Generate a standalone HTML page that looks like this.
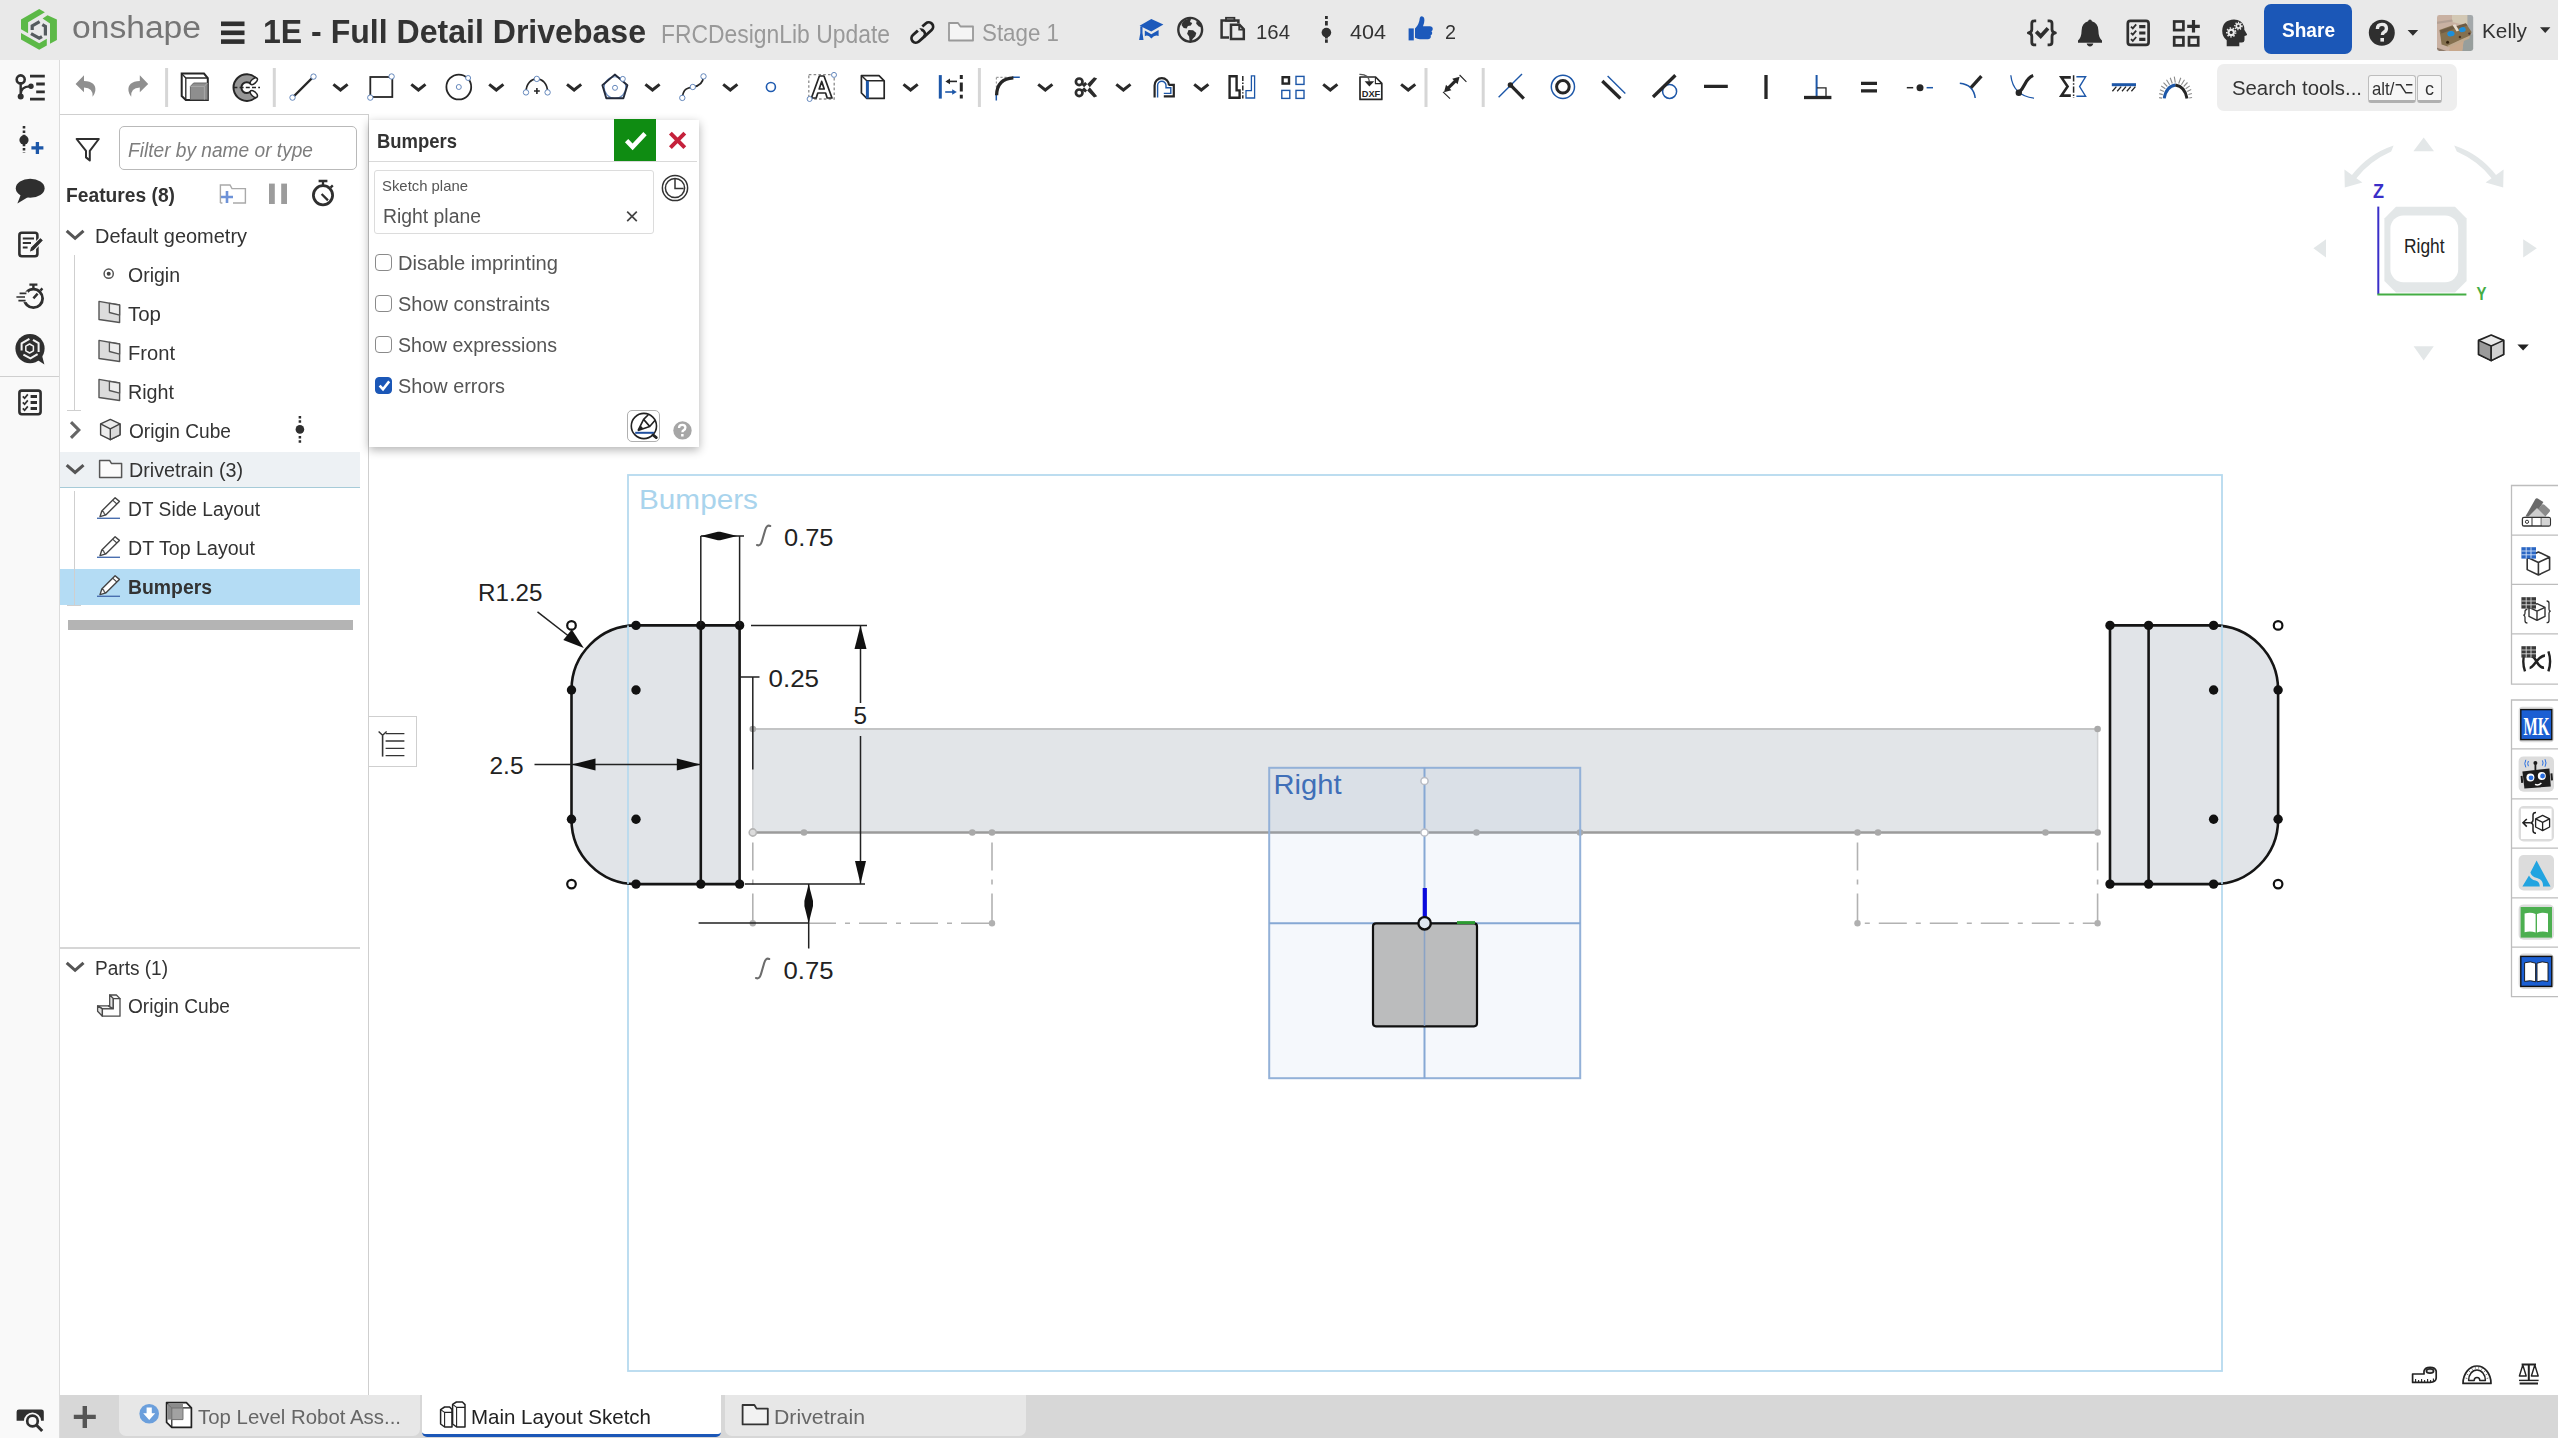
<!DOCTYPE html>
<html lang="en">
<head>
<meta charset="utf-8">
<title>1E - Full Detail Drivebase | Main Layout Sketch</title>
<style>
*{box-sizing:border-box;margin:0;padding:0}
html,body{width:2558px;height:1438px;overflow:hidden;background:#fff}
body{position:relative;font-family:"Liberation Sans",sans-serif;color:#333;font-size:20px}
.abs{position:absolute}
/* fitted text: top = baseline y; margin pulls up to baseline */
.t{position:absolute;white-space:nowrap;line-height:1;transform-origin:0 0;margin-top:-.8465em;display:block}
svg{position:absolute;overflow:visible}
#header{position:absolute;left:0;top:0;width:2558px;height:60px;background:#e9e9e9}
#leftcol{position:absolute;left:0;top:60px;width:60px;height:1378px;background:#f9f9f9;border-right:1px solid #dcdcdc}
#toolbar{position:absolute;left:60px;top:60px;width:2498px;height:55px;background:#fff}
#fpanel{position:absolute;left:60px;top:114px;width:309px;height:1281px;background:#fff;border-top:1px solid #cfcfcf;border-right:1px solid #cfcfcf}
#bottombar{position:absolute;left:60px;top:1395px;width:2498px;height:43px;background:#d7d7d7}
#dialog{position:absolute;left:369px;top:119.6px;width:330px;height:327px;background:#fff;box-shadow:0 3px 9px rgba(0,0,0,.3)}
.cb{left:6px;width:17px;height:17px;border:1.5px solid #8a8a8a;border-radius:4px;background:#fff}
.cb.on{background:#1b57b7;border-color:#1b57b7}
.tab{position:absolute;top:0;height:40px;background:#e7e7e7;border-radius:0 0 7px 7px}
</style>
</head>
<body>

<!-- ================= HEADER ================= -->
<div id="header">
  <span class="t" style="transform:scaleX(1.0845);left:72px;top:38px;font-size:31px;color:#757575">onshape</span>
  <span class="t" style="transform:scaleX(0.9427);left:263px;top:43px;font-size:34px;font-weight:bold;color:#333">1E - Full Detail Drivebase</span>
  <span class="t" style="transform:scaleX(0.9155);left:661px;top:43px;font-size:25px;color:#999">FRCDesignLib Update</span>
  <span class="t" style="transform:scaleX(0.9307);left:982px;top:41px;font-size:24px;color:#999">Stage 1</span>
  <span class="t" style="transform:scaleX(0.9701);left:1256px;top:39px;font-size:21px;color:#333">164</span>
  <span class="t" style="transform:scaleX(1.0272);left:1350px;top:39px;font-size:21px;color:#333">404</span>
  <span class="t" style="transform:scaleX(0.9412);left:1445px;top:39px;font-size:21px;color:#333">2</span>
  <div class="abs" style="left:2264px;top:4px;width:88px;height:50px;border-radius:7px;background:#1b57b7"></div>
  <span class="t" style="transform:scaleX(0.9301);left:2282px;top:37px;font-size:20.5px;font-weight:bold;color:#fff">Share</span>
  <span class="t" style="transform:scaleX(0.9883);left:2482px;top:38px;font-size:21px;color:#333">Kelly</span>
</div>

<!-- ================= TOOLBAR ================= -->
<div id="toolbar">
  <div class="abs" style="left:2157px;top:4px;width:240px;height:47px;border-radius:7px;background:#eeeeee"></div>
  <span class="t" style="transform:scaleX(0.9920);left:2172px;top:35px;font-size:20.5px;color:#333">Search tools...</span>
  <div class="abs" style="left:2308px;top:15px;width:48px;height:28px;border:1px solid #bdbdbd;border-bottom:3px solid #b0b0b0;border-radius:3px;background:#f6f6f6"></div>
  <div class="abs" style="left:2357px;top:15px;width:25px;height:28px;border:1px solid #bdbdbd;border-bottom:3px solid #b0b0b0;border-radius:3px;background:#f6f6f6"></div>
  <span class="t" style="transform:scaleX(0.8833);left:2312.2px;top:35px;font-size:19px;color:#333">alt/</span>
  <span class="t" style="transform:scaleX(0.9474);left:2365px;top:35px;font-size:19px;color:#333">c</span>
</div>

<!-- ================= LEFT ICON COLUMN ================= -->
<div id="leftcol"></div>

<!-- ================= FEATURE PANEL ================= -->
<div id="fpanel">
  <!-- filter -->
  <div class="abs" style="left:59px;top:11px;width:238px;height:44px;border:1px solid #b9b9b9;border-radius:5px;background:#fff"></div>
  <span class="t" style="transform:scaleX(0.9565);left:68px;top:42px;font-size:20px;font-style:italic;color:#7d7d7d">Filter by name or type</span>
  <span class="t" style="transform:scaleX(0.9614);left:6px;top:87px;font-size:20px;font-weight:bold;color:#333">Features (8)</span>
  <!-- rows: row centre y (page) = 235 + 39*i ; panel top is 114 (border 1) -->
  <div class="abs" style="left:0;top:337px;width:300px;height:36px;background:#edf1f4;border-bottom:1.5px solid #a6cbd8"></div>
  <div class="abs" style="left:0;top:454px;width:300px;height:36px;background:#b4dcf4"></div>
  <div class="abs" style="left:14px;top:140px;width:1px;height:156px;background:#cfcfcf"></div>
  <div class="abs" style="left:7px;top:295px;width:14px;height:1px;background:#cfcfcf"></div>
  <div class="abs" style="left:14px;top:376px;width:1px;height:115px;background:#cfcfcf"></div><div class="abs" style="left:7px;top:490px;width:14px;height:1px;background:#cfcfcf"></div>
  <span class="t" style="transform:scaleX(0.9981);left:35px;top:128px;font-size:20px">Default geometry</span>
  <span class="t" style="transform:scaleX(0.9745);left:68px;top:167px;font-size:20px">Origin</span>
  <span class="t" style="transform:scaleX(1.0233);left:68px;top:206px;font-size:20px">Top</span>
  <span class="t" style="transform:scaleX(1.0067);left:68px;top:245px;font-size:20px">Front</span>
  <span class="t" style="transform:scaleX(0.9849);left:68px;top:284px;font-size:20px">Right</span>
  <span class="t" style="transform:scaleX(0.9558);left:69px;top:323px;font-size:20px">Origin Cube</span>
  <span class="t" style="transform:scaleX(0.9863);left:69px;top:362px;font-size:20px">Drivetrain (3)</span>
  <span class="t" style="transform:scaleX(0.9600);left:68px;top:401px;font-size:20px">DT Side Layout</span>
  <span class="t" style="transform:scaleX(0.9818);left:68px;top:440px;font-size:20px">DT Top Layout</span>
  <span class="t" style="transform:scaleX(0.9688);left:68px;top:479px;font-size:20px;font-weight:bold">Bumpers</span>
  <div class="abs" style="left:8px;top:505px;width:285px;height:10px;background:#b4b4b4"></div>
  <div class="abs" style="left:0;top:832px;width:300px;height:2px;background:#d6d6d6"></div>
  <span class="t" style="transform:scaleX(0.9519);left:35px;top:860px;font-size:20px">Parts (1)</span>
  <span class="t" style="transform:scaleX(0.9558);left:68px;top:898px;font-size:20px">Origin Cube</span>
</div>

<!-- ================= CANVAS ================= -->
<svg id="canvas" style="left:0;top:0" width="2558" height="1438" viewBox="0 0 2558 1438" font-family="Liberation Sans, sans-serif">
  <!-- sketch boundary -->
  <rect x="628" y="475" width="1594" height="896" fill="none" stroke="#b6daef" stroke-width="1.8"/>
  <text x="639" y="508.5" font-size="27.5" fill="#a9d4ed" textLength="119" lengthAdjust="spacingAndGlyphs">Bumpers</text>

  <!-- long grey frame rect -->
  <rect x="752.8" y="729" width="1344.8" height="103.5" fill="#e2e5e8"/>
  <line x1="752.8" y1="729" x2="2097.6" y2="729" stroke="#c3c4c5" stroke-width="2.2"/>
  <line x1="752.8" y1="729" x2="752.8" y2="832.5" stroke="#d0d2d4" stroke-width="1.5"/>
  <line x1="2097.6" y1="729" x2="2097.6" y2="832.5" stroke="#d0d2d4" stroke-width="1.5"/>
  <line x1="752.8" y1="832.5" x2="2097.6" y2="832.5" stroke="#9b9b9b" stroke-width="2.6"/>

  <!-- dash-dot construction rects -->
  <g fill="none" stroke="#b2b2b2" stroke-width="1.6" stroke-dasharray="28 9 5 9">
    <path d="M752.8,842.5 V923.2 M808,923.2 H992 M992,842.5 V923.2"/>
    <path d="M1857.5,842.5 V923.2 H2097.6 M2097.6,842.5 V923.2"/>
  </g>
  <circle cx="804" cy="832.5" r="3.3" fill="#a9a9a9"/><circle cx="972.3" cy="832.5" r="3.3" fill="#a9a9a9"/><circle cx="992" cy="832.5" r="3.3" fill="#a9a9a9"/><circle cx="1476.5" cy="832.5" r="3.3" fill="#a9a9a9"/><circle cx="1580" cy="832.5" r="3.3" fill="#a9a9a9"/><circle cx="1857.5" cy="832.5" r="3.3" fill="#a9a9a9"/><circle cx="1878" cy="832.5" r="3.3" fill="#a9a9a9"/><circle cx="2045.5" cy="832.5" r="3.3" fill="#a9a9a9"/><circle cx="2097.6" cy="832.5" r="3.3" fill="#a9a9a9"/><circle cx="2097.6" cy="729" r="3.3" fill="#a9a9a9"/><circle cx="752.8" cy="729" r="3.3" fill="#a9a9a9"/>
  <circle cx="752.8" cy="923.2" r="3.2" fill="#b0b0b0"/><circle cx="992" cy="923.2" r="3.2" fill="#b0b0b0"/><circle cx="1857.5" cy="923.2" r="3.2" fill="#b0b0b0"/><circle cx="2097.6" cy="923.2" r="3.2" fill="#b0b0b0"/>
  <circle cx="752.8" cy="832.5" r="3.6" fill="#dcdcdc" stroke="#b5b5b5" stroke-width="1.6"/>

  <!-- Right plane -->
  <rect x="1269.2" y="767.8" width="311" height="310.4" fill="#8fb4d9" fill-opacity=".09" stroke="#93b1d8" stroke-width="2"/>
  <line x1="1424.5" y1="767.8" x2="1424.5" y2="1078.2" stroke="#86a8d4" stroke-width="2"/>
  <line x1="1269.2" y1="923.3" x2="1580.2" y2="923.3" stroke="#86a8d4" stroke-width="2"/>
  <text x="1273.5" y="794" font-size="28" fill="#3f6fb8" textLength="68" lengthAdjust="spacingAndGlyphs">Right</text>
  <circle cx="1424.5" cy="781" r="3.6" fill="#fff" stroke="#b9bcc4" stroke-width="1.5"/><circle cx="1424.5" cy="832.5" r="3.6" fill="#fff" stroke="#b9bcc4" stroke-width="1.5"/>

  <!-- origin cube -->
  <rect x="1373" y="923.3" width="104" height="103" rx="3" fill="#bbbcbd" stroke="#111" stroke-width="2.2"/>
  <line x1="1424.5" y1="924" x2="1424.5" y2="1026" stroke="#7f9dc8" stroke-width="1.6" opacity=".8"/>
  <line x1="1457" y1="922.6" x2="1475" y2="922.6" stroke="#2c9b32" stroke-width="3"/>
  <line x1="1424.8" y1="888" x2="1424.8" y2="918" stroke="#0a0adc" stroke-width="4.2"/>
  <circle cx="1424.6" cy="923.3" r="6.2" fill="#dfe6f0" stroke="#111" stroke-width="2.4"/>

  <!-- LEFT bumper -->
  <path d="M636,625.4 H739.6 V884.1 H636 A64.5,64.5 0 0 1 571.5,819.3 V690 A64.5,64.5 0 0 1 636,625.4 Z" fill="#e1e4e8" stroke="#151515" stroke-width="2.6" stroke-linejoin="round"/>
  <line x1="700.8" y1="625.4" x2="700.8" y2="884.1" stroke="#151515" stroke-width="2.6"/>
  <line x1="628" y1="625.4" x2="628" y2="884.1" stroke="#b3d8ee" stroke-width="1.6"/>
  <circle cx="636" cy="625.4" r="4.7" fill="#111"/><circle cx="700.8" cy="625.4" r="4.7" fill="#111"/><circle cx="739.6" cy="625.4" r="4.7" fill="#111"/><circle cx="571.5" cy="690" r="4.7" fill="#111"/><circle cx="636" cy="690" r="4.7" fill="#111"/><circle cx="571.5" cy="819.3" r="4.7" fill="#111"/><circle cx="636" cy="819.3" r="4.7" fill="#111"/><circle cx="636" cy="884.1" r="4.7" fill="#111"/><circle cx="700.8" cy="884.1" r="4.7" fill="#111"/><circle cx="739.6" cy="884.1" r="4.7" fill="#111"/>
  <circle cx="571.5" cy="625.4" r="4.3" fill="#fff" stroke="#111" stroke-width="2.2"/><circle cx="571.5" cy="884.1" r="4.3" fill="#fff" stroke="#111" stroke-width="2.2"/>

  <!-- RIGHT bumper -->
  <path d="M2213.6,625.4 H2110 V884.1 H2213.6 A64.5,64.5 0 0 0 2278.1,819.3 V690 A64.5,64.5 0 0 0 2213.6,625.4 Z" fill="#e1e4e8" stroke="#151515" stroke-width="2.6" stroke-linejoin="round"/>
  <line x1="2148.6" y1="625.4" x2="2148.6" y2="884.1" stroke="#151515" stroke-width="2.6"/>
  <line x1="2222" y1="625.4" x2="2222" y2="884.1" stroke="#b3d8ee" stroke-width="1.6"/>
  <circle cx="2110" cy="625.4" r="4.7" fill="#111"/><circle cx="2148.6" cy="625.4" r="4.7" fill="#111"/><circle cx="2213.6" cy="625.4" r="4.7" fill="#111"/><circle cx="2213.6" cy="690" r="4.7" fill="#111"/><circle cx="2278.1" cy="690" r="4.7" fill="#111"/><circle cx="2213.6" cy="819.3" r="4.7" fill="#111"/><circle cx="2278.1" cy="819.3" r="4.7" fill="#111"/><circle cx="2110" cy="884.1" r="4.7" fill="#111"/><circle cx="2148.6" cy="884.1" r="4.7" fill="#111"/><circle cx="2213.6" cy="884.1" r="4.7" fill="#111"/>
  <circle cx="2278.1" cy="625.4" r="4.3" fill="#fff" stroke="#111" stroke-width="2.2"/><circle cx="2278.1" cy="884.1" r="4.3" fill="#fff" stroke="#111" stroke-width="2.2"/>

  <!-- DIMENSIONS -->
  <g stroke="#222" stroke-width="1.5" fill="none">
    <!-- 0.75 top -->
    <path d="M700.8,625.4 V536 M739.6,625.4 V536 M700.8,536 H744"/>
    <!-- 5 -->
    <path d="M751,625.4 H867 M745,884.1 H865 M860.5,625.4 V703 M860.5,736 V884.1"/>
    <!-- 0.25 -->
    <path d="M739.6,677 H759.5 M752.8,677 V769.5"/>
    <!-- 2.5 -->
    <path d="M534.5,764.6 H700.8"/>
    <!-- 0.75 bottom -->
    <path d="M808.7,884.1 V948.5 M698.6,923 H808.7"/>
    <!-- R1.25 leader -->
    <path d="M537.5,611.8 L575,641"/>
  </g>
  <g fill="#111">
    <path d="M700.8,536 l17,-4.3 l2.4,0 l17,4.3 l-17,4.3 l-2.4,0 Z"/>
    <path d="M860.5,625.4 l-6,23.5 h12 Z"/>
    <path d="M860.5,884.1 l-5.5,-23 h11 Z"/>
    <path d="M571.5,764.6 l24,-6 v12 Z"/>
    <path d="M700.8,764.6 l-24,-6 v12 Z"/>
    <path d="M808.7,884.1 l-4.3,17 v5 l4.3,17.2 l4.3,-17.2 v-5 Z"/>
    <path d="M583.8,648 l-20.5,-8 l8.5,-10.5 Z"/>
  </g>
  <g fill="#222" font-size="24">
    <text x="784" y="546" textLength="49.5" lengthAdjust="spacingAndGlyphs">0.75</text>
    <text x="478" y="600.6" textLength="64.5" lengthAdjust="spacingAndGlyphs">R1.25</text>
    <text x="768.5" y="686.6" textLength="50.5" lengthAdjust="spacingAndGlyphs">0.25</text>
    <text x="853.5" y="724" textLength="13.5" lengthAdjust="spacingAndGlyphs">5</text>
    <text x="489.5" y="774.4" textLength="34" lengthAdjust="spacingAndGlyphs">2.5</text>
    <text x="783.5" y="979" textLength="50" lengthAdjust="spacingAndGlyphs">0.75</text>
  </g>
  <g fill="none" stroke="#6c6c6c" stroke-width="2.1" stroke-linecap="round">
    <path d="M757,545 q3.5,1.5 5,-4 l3.2,-11 q1.5,-5.5 5,-4"/>
    <path d="M756,978 q3.5,1.5 5,-4 l3.2,-11 q1.5,-5.5 5,-4"/>
  </g>
</svg>

<!-- ================= DIALOG ================= -->
<div id="dialog">
  <span class="t" style="transform:scaleX(0.8788);left:8px;top:28px;font-size:21px;font-weight:bold;color:#333">Bumpers</span>
  <div class="abs" style="left:0;top:41px;width:328px;height:1px;background:#d9d9d9"></div>
  <div class="abs" style="left:245px;top:-1px;width:42px;height:42px;background:#0f8c12"></div>
  <div class="abs" style="left:5px;top:50px;width:280px;height:64px;border:1px solid #dcdcdc;border-radius:3px"></div>
  <span class="t" style="transform:scaleX(0.9915);left:13px;top:71px;font-size:15px;color:#555">Sketch plane</span>
  <span class="t" style="transform:scaleX(0.9685);left:14px;top:103px;font-size:20px;color:#555">Right plane</span>
  <div class="abs cb" style="top:134px"></div>
  <div class="abs cb" style="top:175px"></div>
  <div class="abs cb" style="top:216px"></div>
  <div class="abs cb on" style="top:257px"></div>
  <span class="t" style="transform:scaleX(1.0065);left:29px;top:150px;font-size:20px;color:#555">Disable imprinting</span>
  <span class="t" style="transform:scaleX(0.9981);left:29px;top:191px;font-size:20px;color:#555">Show constraints</span>
  <span class="t" style="transform:scaleX(0.9796);left:29px;top:232px;font-size:20px;color:#555">Show expressions</span>
  <span class="t" style="transform:scaleX(0.9925);left:29px;top:273px;font-size:20px;color:#555">Show errors</span>
  <div class="abs" style="left:258.4px;top:290px;width:32.6px;height:32.8px;border:1px solid #b0b0b0;border-radius:5px;background:#fff"></div>
</div>
<div class="abs" style="left:369px;top:716px;width:48px;height:51px;border:1px solid #cfcfcf;border-left:none;background:#fff"></div>

<!-- ================= BOTTOM BAR ================= -->
<div id="bottombar">
  <div class="tab" style="left:58.6px;width:301px;height:41px"></div>
  <div class="tab" style="left:362px;width:299px;background:#fff;border-bottom:3px solid #1b57b7;border-radius:0 0 5px 5px;height:42px"></div>
  <div class="tab" style="left:664.6px;width:301px;height:41px"></div>
  <span class="t" style="transform:scaleX(0.9714);left:138px;top:29px;font-size:21px;color:#666">Top Level Robot Ass...</span>
  <span class="t" style="transform:scaleX(0.9759);left:411px;top:29px;font-size:21px;color:#222">Main Layout Sketch</span>
  <span class="t" style="transform:scaleX(1.0127);left:714px;top:29px;font-size:21px;color:#666">Drivetrain</span>
</div>

<!-- ================= ICON OVERLAY (page coords) ================= -->
<svg id="icons" style="left:0;top:0" width="2558" height="1438" viewBox="0 0 2558 1438" fill="none" stroke-linecap="butt">
<g id="hdr-icons">
  <!-- onshape logo -->
  <g fill="#5cb947">
    <path d="M39.2,9 L44.9,12.3 L28.1,22.3 L28.1,33.3 L21,29.3 L21,19.6 Z"/>
    <path d="M21,32.9 L39.2,43.2 L46.8,38.7 L46.8,45.4 L39.2,49.8 L21,39.6 Z"/>
    <path d="M47.5,15.2 L56.9,19.6 L56.9,40 L50,43.8 L50,23.5 L42.6,18.6 Z"/>
  </g>
  <g stroke="#555b5e" stroke-width="3.2" stroke-linejoin="miter">
    <path d="M39.6,21.6 L32.2,25.9 L32.2,30"/>
    <path d="M31,33.6 L39.2,38.2 L42,36.6"/>
    <path d="M42.3,24.6 L45.4,26.4 L45.4,35.6"/>
  </g>
  <!-- hamburger -->
  <g fill="#2f2f2f"><rect x="221" y="21.5" width="23.5" height="4.6"/><rect x="221" y="30.5" width="23.5" height="4.6"/><rect x="221" y="39.3" width="23.5" height="4.6"/></g>
  <!-- link -->
  <g stroke="#222" stroke-width="2.8" transform="translate(922.3,32.5) rotate(-42)">
    <rect x="-13" y="-4.4" width="15" height="8.8" rx="4.4"/>
    <path d="M-2,4.4 H8.6 A4.4,4.4 0 0 0 8.6,-4.4 H4"/>
    <path d="M-2,-4.4 H0.6" stroke="#e9e9e9" stroke-width="4.2"/>
  </g>
  <!-- folder -->
  <path d="M949,40.5 V23 H958 L960.5,26.5 H973 V40.5 Z" fill="#f5f5f5" stroke="#9a9a9a" stroke-width="1.8" stroke-linejoin="round"/>
  <!-- graduation cap -->
  <g fill="#1c59bb">
    <path d="M1139.6,25.8 L1151.3,19 L1163.4,24.6 L1151.3,31.6 Z"/>
    <path d="M1144.8,30.5 L1151.3,34.2 L1158.6,30 V36 Q1155,34 1151.3,38.6 Q1148,34 1144.8,36.3 Z"/>
    <path d="M1140.3,26.5 h2.2 V33 l1,7 h-4.4 l1.2,-7 Z"/>
  </g>
  <!-- globe -->
  <circle cx="1190.2" cy="29.8" r="11.9" stroke="#333" stroke-width="2.4"/>
  <g fill="#333">
    <path d="M1184,20.5 q3.5,-2 7,-1.6 l-1,3 l2.2,1 l-1.3,2.6 l-3,0.4 l-1.3,2.6 l-2.9,-0.6 l-2.2,-3 q0.6,-2.6 2.5,-4.4 Z"/>
    <path d="M1188.5,30 l4.6,0.2 l3.2,2.7 l-1,3.4 l-2.7,2.6 l-1,2.8 l-2,-0.7 l-0.5,-4.6 l-2,-2.6 Z"/>
    <path d="M1196.6,21 l3.6,2.6 l1.2,3.6 l-2.6,-0.8 l-2.6,-2.6 Z"/>
  </g>
  <!-- copy docs -->
  <g stroke="#333" stroke-width="2.5" stroke-linejoin="miter">
    <path d="M1229,37.5 H1221.6 V20.5 H1238.4 V23.5"/>
    <rect x="1226" y="17.8" width="8.4" height="3" stroke-width="1.8"/>
    <path d="M1231,24.8 H1239.5 L1243.8,29.2 V39 H1231 Z"/>
    <path d="M1239.2,25 V29.6 H1243.6" stroke-width="1.8"/>
  </g>
  <!-- version dot -->
  <g fill="#2f2f2f"><circle cx="1326.4" cy="32.6" r="4.8"/>
    <rect x="1325" y="16" width="2.8" height="3"/><rect x="1325" y="21" width="2.8" height="4.5"/>
    <rect x="1325" y="39.4" width="2.8" height="3.4"/><rect x="1325" y="37" width="2.8" height="1.5"/></g>
  <!-- thumbs up -->
  <g fill="#1c59bb">
    <path d="M1408.6,28.4 h5.2 v12 h-5.2 Z"/>
    <path d="M1415,28.6 q4.2,-4 4.8,-10.6 q0.3,-1.8 2,-1.8 q2.8,0.4 2.6,4.4 q-0.1,2.8 -1.4,5.6 h7.2 q2.6,0.2 2.6,2.6 q0,1.7 -1.3,2.4 q1,1 0.6,2.6 q-0.3,1.2 -1.5,1.7 q0.6,1.2 0,2.3 q-0.7,1.3 -2.4,1.4 h-8.4 q-2.6,-0.1 -4.8,-1.4 Z"/>
  </g>
  <!-- {check} -->
  <g stroke="#2f2f2f" stroke-width="2.8" stroke-linejoin="round">
    <path d="M2036.2,20.9 h-1.8 q-2.6,0 -2.6,2.6 v6 q0,2.8 -3.4,3.4 q3.4,0.6 3.4,3.4 v6 q0,2.6 2.6,2.6 h1.8"/>
    <path d="M2047.6,20.9 h1.8 q2.6,0 2.6,2.6 v6 q0,2.8 3.4,3.4 q-3.4,0.6 -3.4,3.4 v6 q0,2.6 -2.6,2.6 h-1.8"/>
    <path d="M2036.2,31.6 L2040.7,36.2 L2048,28.2" stroke-width="3.8" stroke-linejoin="miter"/>
  </g>
  <!-- bell -->
  <path d="M2090,19.4 q1.7,0 1.9,1.8 q6.3,1.7 6.5,9.2 q0.1,7 3.6,10 v2.3 h-24 v-2.3 q3.5,-3 3.6,-10 q0.2,-7.5 6.5,-9.2 q0.2,-1.8 1.9,-1.8 Z M2086.7,43.6 h6.6 q-0.5,2.8 -3.3,2.8 q-2.8,0 -3.3,-2.8 Z" fill="#2f2f2f"/>
  <!-- checklist -->
  <g stroke="#2f2f2f">
    <rect x="2127.8" y="20.9" width="20.8" height="24" rx="2.6" stroke-width="2.7"/>
    <path d="M2139.2,26.7 h6.2 M2139.2,33 h6.2 M2139.2,39.3 h6.2" stroke-width="3.2"/>
    <path d="M2131,26.6 l1.8,1.8 l3.4,-4 M2131,32.9 l1.8,1.8 l3.4,-4 M2131,39.2 l1.8,1.8 l3.4,-4" stroke-width="1.8"/>
  </g>
  <!-- grid plus -->
  <g stroke="#2f2f2f" stroke-width="2.7">
    <rect x="2174.2" y="21.5" width="9.2" height="8.6"/><rect x="2174.2" y="37.2" width="9.2" height="8.2"/><rect x="2189" y="37.2" width="9.2" height="8.2"/>
    <path d="M2193.5,20 v12.6 M2187.2,26.3 h12.6" stroke-width="3.2"/>
  </g>
  <!-- head with gears -->
  <path d="M2234,19.6 q7.6,0 10,6.6 q0.5,2.4 0.3,3.6 l2.7,4.4 q0.3,1 -0.8,1.3 l-1.7,0.4 v4.4 q-0.2,2.2 -2.6,2.2 h-2.6 v3.8 h-12.6 v-6 q-4.5,-3.6 -4.5,-9.6 q0.4,-10.6 11.8,-11.1 Z" fill="#2f2f2f"/>
  <g fill="#e9e9e9"><circle cx="2231.2" cy="32.4" r="3.7"/><circle cx="2238.4" cy="26" r="2.9"/></g>
  <g stroke="#e9e9e9" stroke-width="1.6" stroke-dasharray="1.5 1.6"><circle cx="2231.2" cy="32.4" r="4.4"/><circle cx="2238.4" cy="26" r="3.5" stroke-dasharray="1.2 1.4"/></g>
  <g fill="#2f2f2f"><circle cx="2231.2" cy="32.4" r="1.6"/><circle cx="2238.4" cy="26" r="1.2"/></g>
  <!-- help ? -->
  <circle cx="2381.8" cy="32.8" r="13" fill="#2f2f2f"/>
  <path d="M2377.4,29 q0,-4.6 4.6,-4.6 q4.4,0 4.4,4 q0,2.4 -2.2,3.6 q-1.8,1 -1.8,3" stroke="#e9e9e9" stroke-width="3.4"/>
  <rect x="2380.4" y="38" width="3.6" height="3.6" fill="#e9e9e9"/>
  <path d="M2407.6,30 h10.6 l-5.3,5.8 Z M2540,27.2 h10.4 l-5.2,5.8 Z" fill="#2f2f2f"/>
  <!-- avatar -->
  <defs><clipPath id="avc"><rect x="2437" y="15" width="36.2" height="36" rx="2.4"/></clipPath><filter id="avb" x="-10%" y="-10%" width="120%" height="120%"><feGaussianBlur stdDeviation="0.55"/></filter></defs>
  <g clip-path="url(#avc)"><g filter="url(#avb)">
    <rect x="2435" y="13" width="40" height="40" fill="#c9b1a2"/>
    <path d="M2452,13 H2470 V26 L2452,22 Z" fill="#d3c8b4"/>
    <path d="M2435,22 L2452,19.6 L2453,21.4 L2435,24.2 Z" fill="#b3a094"/>
    <path d="M2467.4,13 H2476 V54 H2462.4 L2464.4,37 L2467.4,33 Z" fill="#a3a8aa"/>
    <path d="M2464,38 L2476,33 V54 H2461.6 Z" fill="#979e9c"/>
    <path d="M2435,47 L2452,53 H2435 Z" fill="#8d7a6a"/>
    <path d="M2452,41 L2464,37 L2462,54 H2448 Z" fill="#c7a88c"/>
    <path d="M2439.4,30 L2452.6,25.2 L2456,27.6 L2466,23.6 L2471.6,32 L2470,36 L2458,41.6 L2448.4,46.8 L2441.6,44.4 L2440.6,37 Z" fill="#84704f"/>
    <path d="M2440,30.6 L2452.4,26.2 L2455,28.4 L2441.6,33.4 Z" fill="#6e5c44"/>
    <path d="M2455,26.6 L2465.6,23.2 L2467.6,25.6 L2457.4,28.8 Z" fill="#6e5c44"/>
    <path d="M2452.6,25 L2455.4,24.2 L2459,30.6 L2456.6,31.6 Z" fill="#e6dcd0"/>
    <path d="M2447,46 L2460,40 L2470,35.4 L2469.4,38.4 L2449,47.6 Z" fill="#bfa98e"/>
    <ellipse cx="2450.9" cy="33.7" rx="3.7" ry="2.7" fill="#1f8fdb" transform="rotate(-12 2450.9 33.7)"/>
    <ellipse cx="2462.4" cy="29.6" rx="3.4" ry="2.5" fill="#1f8fdb" transform="rotate(-12 2462.4 29.6)"/>
    <circle cx="2447.6" cy="42.2" r="1.5" fill="#33200f"/><circle cx="2459.9" cy="37" r="1.2" fill="#4a3424"/><circle cx="2469.3" cy="33.6" r="1.1" fill="#4a3030"/>
  </g></g>
</g>
</g>
<g id="tb-icons">
  <!-- undo / redo -->
  <path d="M75.6,84 L84,75.3 V81 Q96.5,81.5 95.3,91 Q94.6,94.6 92.6,96.8 Q93.4,87.6 84,87.4 V92.3 Z" fill="#8f8f8f"/>
  <path d="M148.2,84 L139.8,75.3 V81 Q127.3,81.5 128.5,91 Q129.2,94.6 131.2,96.8 Q130.4,87.6 139.8,87.4 V92.3 Z" fill="#8f8f8f"/>
  <rect x="165.1" y="68" width="3" height="39" fill="#d6d6d6"/>
  <!-- sketch/cube -->
  <path d="M181.7,73.6 H204 L207.8,78 V100 H185.8 L181.7,96 Z" fill="#fff" stroke="#262626" stroke-width="2"/>
  <path d="M181.7,73.6 L185.8,78 H207.8 M185.8,78 V100" stroke="#262626" stroke-width="1.3"/>
  <path d="M190.4,86.4 L193.6,83 H207.4 V99.6 H190.4 Z" fill="#8e8e8e" stroke="#6a6a6a" stroke-width="1"/>
  <path d="M190.4,86.4 H204.4 L207.4,83 M204.4,86.4 V99.6" stroke="#a8a8a8" stroke-width="1"/>
  <!-- revolve -->
  <path d="M256.6,78.6 A13.3,13.3 0 1 0 256.6,96.6 L250.6,91.4 A5.4,5.4 0 1 1 250.6,83.8 Z" fill="#979797" stroke="#262626" stroke-width="2" stroke-linejoin="round"/>
  <ellipse cx="253.8" cy="81.2" rx="4.3" ry="2.3" transform="rotate(-42 253.8 81.2)" fill="#fff" stroke="#262626" stroke-width="1.5"/>
  <ellipse cx="253.8" cy="94" rx="4.3" ry="2.3" transform="rotate(42 253.8 94)" fill="#fff" stroke="#262626" stroke-width="1.5"/>
  <path d="M233.4,87.6 H260" stroke="#262626" stroke-width="1.5" stroke-dasharray="4 2.2"/>
  <rect x="272.8" y="68" width="3" height="39" fill="#d6d6d6"/>
  <!-- line -->
  <path d="M292.5,97.6 L313.5,76.6" stroke="#262626" stroke-width="2.2"/><circle cx="292.5" cy="97.6" r="2.7" fill="#fff" stroke="#5d82b8" stroke-width="0.95"/><circle cx="313.5" cy="76.6" r="2.7" fill="#fff" stroke="#5d82b8" stroke-width="0.95"/>
  <path d="M333.4,84.4 L340.5,90 L347.6,84.4" stroke="#2a2a2a" stroke-width="3" fill="none"/>
  <!-- rectangle -->
  <rect x="370.3" y="77" width="22" height="20" stroke="#262626" stroke-width="1.8"/><circle cx="391.6" cy="76.5" r="2.7" fill="#fff" stroke="#5d82b8" stroke-width="0.95"/><circle cx="370.3" cy="97.6" r="2.7" fill="#fff" stroke="#5d82b8" stroke-width="0.95"/>
  <path d="M411.3,84.4 L418.4,90 L425.5,84.4" stroke="#2a2a2a" stroke-width="3" fill="none"/>
  <!-- circle -->
  <circle cx="458.8" cy="87" r="12.4" stroke="#262626" stroke-width="1.8"/><circle cx="458.8" cy="87" r="2.5" fill="#fff" stroke="#5d82b8" stroke-width="0.95"/><circle cx="468.1" cy="78" r="2.5" fill="#fff" stroke="#5d82b8" stroke-width="0.95"/>
  <path d="M489.2,84.4 L496.3,90 L503.4,84.4" stroke="#2a2a2a" stroke-width="3" fill="none"/>
  <!-- arc -->
  <path d="M526,92.4 C526,74.4 547.6,74.4 547.6,92.4" stroke="#262626" stroke-width="1.7"/>
  <path d="M534,91 h5.8 M536.9,88.1 v5.8" stroke="#262626" stroke-width="1.6"/>
  <circle cx="526" cy="92.4" r="2.7" fill="#fff" stroke="#5d82b8" stroke-width="0.95"/><circle cx="547.6" cy="92.4" r="2.7" fill="#fff" stroke="#5d82b8" stroke-width="0.95"/><circle cx="536.8" cy="78.9" r="2.7" fill="#fff" stroke="#5d82b8" stroke-width="0.95"/>
  <path d="M567.0,84.4 L574.1,90 L581.2,84.4" stroke="#2a2a2a" stroke-width="3" fill="none"/>
  <!-- polygon -->
  <circle cx="615" cy="87.6" r="10.8" stroke="#6a8cc0" stroke-width="1.1"/>
  <path d="M614.8,74.6 L627.4,85.2 L623.4,98.2 H606.3 L602.4,85.2 Z" stroke="#232a3a" stroke-width="1.9" stroke-linejoin="round"/>
  <circle cx="615" cy="87.8" r="2.5" fill="#fff" stroke="#5d82b8" stroke-width="0.95"/><circle cx="622.8" cy="78.9" r="2.5" fill="#fff" stroke="#5d82b8" stroke-width="0.95"/>
  <path d="M645.4,84.4 L652.5,90 L659.6,84.4" stroke="#2a2a2a" stroke-width="3" fill="none"/>
  <!-- spline -->
  <path d="M682.3,97.9 C683,88 689,87.6 692.8,87 C698,86.4 703,84 703.5,76.4" stroke="#262626" stroke-width="1.7"/>
  <circle cx="682.3" cy="97.9" r="2.7" fill="#fff" stroke="#5d82b8" stroke-width="0.95"/><circle cx="692.8" cy="87" r="2.7" fill="#fff" stroke="#5d82b8" stroke-width="0.95"/><circle cx="703.5" cy="76.4" r="2.7" fill="#fff" stroke="#5d82b8" stroke-width="0.95"/>
  <path d="M723.2,84.4 L730.3,90 L737.4,84.4" stroke="#2a2a2a" stroke-width="3" fill="none"/>
  <!-- point -->
  <circle cx="770.9" cy="87" r="4.5" fill="#fff" stroke="#1f5bb0" stroke-width="1.6"/>
  <!-- text -->
  <rect x="808.8" y="74.6" width="25.4" height="24.4" stroke="#8a8a8a" stroke-width="1.3" stroke-dasharray="2.6 2.2"/>
  <path d="M811.4,98 L819.4,76 H824 L832,98 H827.2 L825.6,93 H817.8 L816.2,98 Z M819.2,89 H824.2 L821.7,81.4 Z" fill="#fff" stroke="#262626" stroke-width="1.7" stroke-linejoin="round"/>
  <circle cx="834" cy="74.9" r="2.5" fill="#fff" stroke="#5d82b8" stroke-width="0.95"/><circle cx="809.6" cy="99" r="2.5" fill="#fff" stroke="#5d82b8" stroke-width="0.95"/>
  <!-- cube (transform) -->
  <path d="M861.4,75.6 H879 L884.2,80.8 V98.4 H866.8 L861.4,93 Z" fill="#fff" stroke="#262626" stroke-width="1.7" stroke-linejoin="round"/>
  <path d="M861.4,75.6 L866.8,80.8 H884.2" stroke="#262626" stroke-width="1.4"/>
  <path d="M867.4,80.8 V98.4" stroke="#1d57a8" stroke-width="3"/>
  <path d="M903.5,84.4 L910.6,90 L917.7,84.4" stroke="#2a2a2a" stroke-width="3" fill="none"/>
  <!-- use / convert -->
  <rect x="938.8" y="75.1" width="3" height="23.5" fill="#1d57a8"/>
  <path d="M961.3,75.1 V79 M961.3,82.6 V91.4 M961.3,94.8 V98.6" stroke="#262626" stroke-width="3"/>
  <path d="M957,81.4 H947.4" stroke="#262626" stroke-width="1.6"/><path d="M945.4,81.4 l4.6,-2.8 v5.6 Z" fill="#262626"/>
  <path d="M945.2,92 H954.6" stroke="#1d57a8" stroke-width="1.6"/><path d="M956.8,92 l-4.6,-2.8 v5.6 Z" fill="#1d57a8"/>
  <rect x="977.9" y="68" width="3" height="39" fill="#d6d6d6"/>
  <!-- fillet -->
  <path d="M996.4,77.4 H1008 M996.4,77.4 V88" stroke="#9a9a9a" stroke-width="1.2" stroke-dasharray="2.2 1.8"/>
  <path d="M996.3,100.4 V94 M1012,77.3 H1019.8" stroke="#1d57a8" stroke-width="1.5"/>
  <path d="M996.6,95.2 Q997,78.6 1013.4,77.9" stroke="#262626" stroke-width="3.3"/>
  <path d="M1038.2,84.4 L1045.3,90 L1052.4,84.4" stroke="#2a2a2a" stroke-width="3" fill="none"/>
  <!-- trim (scissors) -->
  <g stroke="#2d2d2d" stroke-width="2.7"><circle cx="1079.2" cy="81.8" r="3.3"/><circle cx="1079.2" cy="92.8" r="3.3"/></g>
  <path d="M1081.4,90 L1094,77.2 L1097.2,78.4 L1085.4,92.6 Z M1081.4,84.6 L1094,97.4 L1097.2,96.2 L1085.4,82 Z" fill="#2d2d2d"/>
  <circle cx="1086.2" cy="87.3" r="1" fill="#fff"/>
  <path d="M1116.3,84.4 L1123.4,90 L1130.5,84.4" stroke="#2a2a2a" stroke-width="3" fill="none"/>
  <!-- offset -->
  <path d="M1157.6,97.6 V85.4 A4.2,4.2 0 0 1 1166,85.4 V87.8 H1170.8 V93.4 H1163.8" stroke="#1d57a8" stroke-width="1.4"/>
  <path d="M1154.6,97.6 V85.4 A7.2,7.2 0 0 1 1169,85.4 V84.8 H1173.8 V96.4 H1163.8" stroke="#262626" stroke-width="2.2"/>
  <path d="M1194.2,84.4 L1201.3,90 L1208.4,84.4" stroke="#2a2a2a" stroke-width="3" fill="none"/>
  <!-- mirror -->
  <path d="M1229.6,76.2 H1236.6 V90.4 H1239.6 V97.8 H1229.6 Z" stroke="#262626" stroke-width="2.4"/>
  <path d="M1242.8,76 V98.6" stroke="#262626" stroke-width="1.5" stroke-dasharray="5 1.6 1.4 1.6"/>
  <path d="M1254.6,75.8 H1251.4 V90.6 H1246 V98 H1254.6 Z" stroke="#1d57a8" stroke-width="1.3"/>
  <!-- pattern -->
  <rect x="1282.6" y="77.2" width="6.4" height="6.4" stroke="#262626" stroke-width="2.4"/>
  <g stroke="#1d57a8" stroke-width="1.4"><rect x="1296" y="76.4" width="8" height="8"/><rect x="1281.8" y="90.4" width="8" height="8"/><rect x="1296" y="90.4" width="8" height="8"/></g>
  <path d="M1323.2,84.4 L1330.3,90 L1337.4,84.4" stroke="#2a2a2a" stroke-width="3" fill="none"/>
  <!-- DXF -->
  <path d="M1360,77 H1375.6 L1381.8,83.4 V99.4 H1360 Z" fill="#fff" stroke="#262626" stroke-width="1.7" stroke-linejoin="round"/>
  <path d="M1375.4,77.2 V83.6 H1381.6" stroke="#262626" stroke-width="1.1"/>
  <path d="M1359.4,74.4 Q1368.6,74 1369.4,81.6" stroke="#555" stroke-width="1.4"/>
  <path d="M1364.6,81.2 H1374.2 L1369.4,86.6 Z" fill="#262626"/>
  <text x="1361.7" y="97.3" font-family="Liberation Sans, sans-serif" font-weight="bold" font-size="8.6" fill="#262626" textLength="18.6" lengthAdjust="spacingAndGlyphs">DXF</text>
  <path d="M1401.1,84.4 L1408.2,90 L1415.3,84.4" stroke="#2a2a2a" stroke-width="3" fill="none"/>
  <rect x="1424.5" y="68" width="3" height="39" fill="#d6d6d6"/>
  <!-- dimension -->
  <path d="M1447.4,88.8 L1456.2,80.2" stroke="#262626" stroke-width="3.2"/>
  <path d="M1444,92.2 L1451.4,90.2 L1446,84.8 Z M1459.6,76.8 L1452.2,78.8 L1457.6,84.2 Z" fill="#262626"/>
  <path d="M1459.6,75 L1466.4,81.9 M1443,91.8 L1450,98.6" stroke="#262626" stroke-width="1.1"/>
  <rect x="1481.7" y="68" width="3" height="39" fill="#d6d6d6"/>
  <!-- coincident -->
  <path d="M1498.6,97.2 L1522,74" stroke="#1d57a8" stroke-width="1.4"/>
  <path d="M1510.6,85.2 L1523.8,98.6" stroke="#262626" stroke-width="3.2"/><circle cx="1510.4" cy="85" r="2.7" fill="#262626"/>
  <!-- concentric -->
  <circle cx="1562.9" cy="86.8" r="11.6" stroke="#1d57a8" stroke-width="1.5"/><circle cx="1562.9" cy="86.8" r="6.3" stroke="#262626" stroke-width="3"/>
  <!-- parallel -->
  <path d="M1602.3,81 L1620.4,98.5" stroke="#262626" stroke-width="3.3"/><path d="M1607.6,76 L1625.3,93.4" stroke="#1d57a8" stroke-width="1.4"/>
  <!-- tangent -->
  <circle cx="1669.6" cy="91.4" r="7" stroke="#1d57a8" stroke-width="1.5"/><path d="M1653,97 L1675.4,75.2" stroke="#262626" stroke-width="3.3"/>
  <!-- horizontal / vertical -->
  <path d="M1704,86.4 H1727.8 M1766,75 V99" stroke="#262626" stroke-width="3.3"/>
  <!-- perpendicular -->
  <path d="M1816.6,75 V96" stroke="#1d57a8" stroke-width="2"/><path d="M1817,87.8 H1826 V96.4" stroke="#262626" stroke-width="1.3"/><path d="M1804,97.5 H1831.4" stroke="#262626" stroke-width="3.3"/>
  <!-- equal -->
  <path d="M1861,83.4 H1877 M1861,90.9 H1877" stroke="#262626" stroke-width="3.3"/>
  <!-- midpoint -->
  <circle cx="1920" cy="87.7" r="3.5" fill="#262626"/><path d="M1906.8,87.7 H1913.2" stroke="#262626" stroke-width="1.5"/><path d="M1926.6,87.7 H1933" stroke="#1d57a8" stroke-width="1.5"/>
  <!-- normal -->
  <path d="M1959.8,83.2 Q1973.6,84.6 1975.2,98" stroke="#1d57a8" stroke-width="1.5"/><path d="M1971,87.6 L1981.4,76.2" stroke="#262626" stroke-width="3.3"/>
  <!-- pierce -->
  <path d="M2010.8,75.2 Q2013,95.6 2034,98.2" stroke="#1d57a8" stroke-width="1.3"/>
  <path d="M2019.4,92 C2026,86 2025,78.4 2033.2,75.6" stroke="#262626" stroke-width="3.2"/><circle cx="2018.8" cy="92.8" r="3.2" fill="#262626"/>
  <!-- symmetric -->
  <path d="M2070.8,77.4 H2061.4 L2067.6,86.6 L2061.4,95.6 H2070.8" stroke="#262626" stroke-width="2.6"/>
  <path d="M2073.6,75.2 V98" stroke="#262626" stroke-width="1.5" stroke-dasharray="6.4 1.6 1.6 1.6"/>
  <path d="M2076.4,76.8 H2085.6 L2079.6,86.6 L2085.6,96.2 H2076.4" stroke="#1d57a8" stroke-width="1.4"/>
  <!-- fix -->
  <path d="M2111.8,84.7 H2136" stroke="#1d57a8" stroke-width="3"/>
  <path d="M2116.4,86.6 l-4,4.6 M2121.2,86.6 l-4,4.6 M2126,86.6 l-4,4.6 M2130.8,86.6 l-4,4.6 M2135.4,86.6 l-4,4.6" stroke="#262626" stroke-width="1.3"/>
  <!-- curvature -->
  <g stroke="#8c8c8c" stroke-width="1.1"><path d="M2162.0,98.1 L2159.1,97.6 M2162.8,94.6 L2159.2,93.6 M2163.9,91.5 L2159.9,89.7 M2165.4,88.8 L2161.2,86.0 M2167.3,86.5 L2163.5,82.6 M2169.6,84.7 L2166.5,79.7 M2172.3,83.5 L2170.2,77.7 M2175.3,82.7 L2174.3,76.6 M2178.7,83.5 L2180.8,77.7 M2181.4,84.7 L2184.5,79.7 M2183.7,86.5 L2187.5,82.5 M2185.7,88.8 L2189.8,85.9 M2187.2,91.5 L2191.2,89.6 M2188.4,94.6 L2191.9,93.5 M2189.2,98.0 L2192.1,97.5"/></g>
  <path d="M2164.2,98.4 Q2166,86.4 2175.6,84.9" stroke="#1d57a8" stroke-width="3"/>
  <path d="M2175.4,84.9 Q2185,86.4 2187,98.4" stroke="#262626" stroke-width="3"/>
  <!-- option glyph in search box -->
  <path d="M2395.6,84.8 H2400.6 L2405.8,92.8 H2412.4 M2406,84.8 H2412.4" stroke="#333" stroke-width="1.5"/>
</g>
<g id="lc-icons">
  <!-- tree icon -->
  <g stroke="#2f2f2f" stroke-width="2.8"><path d="M30,76.2 H44.8 M36.2,84 H44.8 M36.2,91.8 H44.8 M30,99.2 H44.8"/></g>
  <circle cx="20.7" cy="79.4" r="4" stroke="#2f2f2f" stroke-width="2.6"/>
  <path d="M20.7,83.6 V95 M20.7,94 Q21,86.8 29.4,86.4" stroke="#2f2f2f" stroke-width="2.4"/>
  <circle cx="20.7" cy="96.6" r="3" fill="#2f2f2f"/><circle cx="31" cy="86.2" r="2.7" fill="#2f2f2f"/>
  <!-- version + -->
  <circle cx="24" cy="139.9" r="4.6" fill="#2f2f2f"/>
  <path d="M24,126 V153" stroke="#2f2f2f" stroke-width="2.6" stroke-dasharray="2.6 1.8"/>
  <path d="M31.4,147.9 H43.4 M37.4,141.9 V153.9" stroke="#1d57a8" stroke-width="3.3"/>
  <!-- comment -->
  <ellipse cx="30.2" cy="188.2" rx="14.4" ry="9.5" fill="#2f2f2f"/><path d="M21,194 L17.4,203.6 L29,196.6 Z" fill="#2f2f2f"/>
  <!-- notes -->
  <rect x="19.4" y="232.8" width="18" height="23.4" rx="2.4" stroke="#2f2f2f" stroke-width="2.6"/>
  <path d="M22.8,238.6 H34 M22.8,243 H31 M22.8,247.4 H27.6" stroke="#2f2f2f" stroke-width="2"/>
  <path d="M29.2,252.4 L30.4,247.4 L40.4,237.4 L43.6,240.4 L33.6,250.8 Z" fill="#2f2f2f" stroke="#f9f9f9" stroke-width="1.1"/>
  <!-- performance stopwatch -->
  <circle cx="33.4" cy="298.4" r="9.2" stroke="#2f2f2f" stroke-width="2.8"/>
  <path d="M33.4,289 V285.4 M29.4,284.6 H37.4 M40.4,290.6 L42.4,288.4 M33.4,298.4 L37.6,293.6" stroke="#2f2f2f" stroke-width="2.4"/>
  <rect x="16" y="291.6" width="12" height="10.5" fill="#f9f9f9"/>
  <path d="M19.6,293.4 H26.4 M16.4,297 H25 M18.4,300.6 H25.6" stroke="#2f2f2f" stroke-width="1.7"/>
  <!-- onshape chat -->
  <circle cx="30" cy="348.6" r="14.6" fill="#2f2f2f"/><path d="M36,359 L44.4,364.6 L41.6,354 Z" fill="#2f2f2f"/>
  <g stroke="#f3f3f3" stroke-width="2" stroke-linejoin="round">
    <path d="M29.4,338.8 L21.6,343.4 V350.4 M23.4,354.6 L30.4,358.4 L37.6,354.2 M33,339.8 L38.6,343.2 V352"/>
    <path d="M29.6,344 L25.8,346.2 V350.8 L29.6,353 L33.4,350.8 V346.2 Z" stroke-width="1.5"/>
  </g>
  <path d="M0,376.5 H59" stroke="#cfcfcf" stroke-width="1.2"/>
  <!-- checklist -->
  <rect x="19.4" y="390.6" width="21.2" height="23.6" rx="2.4" stroke="#2f2f2f" stroke-width="2.6"/>
  <path d="M30.6,396.6 H37 M30.6,402.6 H37 M30.6,408.6 H37" stroke="#2f2f2f" stroke-width="3"/>
  <path d="M22.8,396.4 l1.8,1.8 l3.2,-3.8 M22.8,402.4 l1.8,1.8 l3.2,-3.8 M22.8,408.4 l1.8,1.8 l3.2,-3.8" stroke="#2f2f2f" stroke-width="1.7"/>
</g>
<g id="fp-icons">
  <!-- funnel -->
  <path d="M76.6,139 H98.8 L89.8,150.8 V160.4 L86,157.4 V150.8 Z" stroke="#2f2f2f" stroke-width="2" stroke-linejoin="round"/>
  <!-- new folder -->
  <path d="M220.4,203 V185 H230 L232,188.6 H245.4 V203 H233" stroke="#a9a9a9" stroke-width="1.4"/>
  <path d="M220.4,203 H224" stroke="#a9a9a9" stroke-width="1.4" stroke-dasharray="2 1.6"/>
  <path d="M221,197 H233 M227,191 V203" stroke="#6d92d8" stroke-width="2.6"/>
  <!-- pause -->
  <rect x="269" y="183.6" width="5.8" height="20.4" fill="#9c9c9c"/><rect x="281.2" y="183.6" width="5.8" height="20.4" fill="#9c9c9c"/>
  <!-- stopwatch -->
  <circle cx="323" cy="195.3" r="9.6" stroke="#2f2f2f" stroke-width="2.8"/>
  <path d="M323,186 V181.4 M318.6,181 H327.4 M330.6,187.6 L332.8,185.4 M321.6,194 L328,200.4" stroke="#2f2f2f" stroke-width="2.3"/>
  <path d="M66.69999999999999,230.9 L75.1,238.29999999999998 L83.5,230.9" stroke="#555" stroke-width="3.1" fill="none"/>
  <!-- origin -->
  <circle cx="108.7" cy="273.7" r="4.6" stroke="#555" stroke-width="1.5"/><circle cx="108.7" cy="273.7" r="2" fill="#444"/>
  <g transform="translate(0,-0.5)"><path d="M99,301.9 L119.6,305.5 V323 L99,320 Z" fill="#dcdcdc" stroke="#555" stroke-width="1.4" stroke-linejoin="round"/><path d="M109.4,303.9 V313 L119.6,315.7 V305.5 Z" fill="#ededed" stroke="#555" stroke-width="1.3" stroke-linejoin="round"/></g><g transform="translate(0,38.5)"><path d="M99,301.9 L119.6,305.5 V323 L99,320 Z" fill="#dcdcdc" stroke="#555" stroke-width="1.4" stroke-linejoin="round"/><path d="M109.4,303.9 V313 L119.6,315.7 V305.5 Z" fill="#ededed" stroke="#555" stroke-width="1.3" stroke-linejoin="round"/></g><g transform="translate(0,77.5)"><path d="M99,301.9 L119.6,305.5 V323 L99,320 Z" fill="#dcdcdc" stroke="#555" stroke-width="1.4" stroke-linejoin="round"/><path d="M109.4,303.9 V313 L119.6,315.7 V305.5 Z" fill="#ededed" stroke="#555" stroke-width="1.3" stroke-linejoin="round"/></g>
  <!-- chevron right -->
  <path d="M71,422.2 L78.8,430 L71,437.8" stroke="#666" stroke-width="3.1"/>
  <!-- cube -->
  <path d="M110.3,419.4 L120,423.9 V434.8 L110.3,439.7 L100.6,434.8 V423.9 Z" fill="#ececec" stroke="#444" stroke-width="1.4" stroke-linejoin="round"/>
  <path d="M110.3,428.8 L120,423.9 V434.8 L110.3,439.7 Z" fill="#dadada" stroke="#444" stroke-width="1.4" stroke-linejoin="round"/>
  <path d="M100.6,423.9 L110.3,428.8" stroke="#444" stroke-width="1.4"/>
  <!-- version dot -->
  <circle cx="299.9" cy="429.4" r="4.3" fill="#2f2f2f"/>
  <path d="M299.9,416 v2.5 M299.9,420.3 v2.5 M299.9,436 v2.5 M299.9,440.3 v2.5" stroke="#2f2f2f" stroke-width="2.5"/>
  <path d="M66.69999999999999,465.1 L75.1,472.5 L83.5,465.1" stroke="#555" stroke-width="3.1" fill="none"/>
  <!-- folder -->
  <path d="M99.6,477.4 V460.4 H109.6 L111.4,463.4 H121.6 V477.4 Z" fill="#fbfbfb" stroke="#555" stroke-width="1.5" stroke-linejoin="round"/>
  <g transform="translate(0,0)"><path d="M97,518.3 H120" stroke="#4a6faf" stroke-width="1.4"/><path d="M100,516.6 L101.8,511 L115.1,497.7 L119.4,501.4 L106,514.8 Z" fill="#fff" stroke="#444" stroke-width="1.4" stroke-linejoin="round"/><path d="M101.8,511 L103.6,512 L104.4,514 L106,514.8 M112.6,500.2 L116.9,504" stroke="#444" stroke-width="1.1" fill="none"/></g><g transform="translate(0,39)"><path d="M97,518.3 H120" stroke="#4a6faf" stroke-width="1.4"/><path d="M100,516.6 L101.8,511 L115.1,497.7 L119.4,501.4 L106,514.8 Z" fill="#fff" stroke="#444" stroke-width="1.4" stroke-linejoin="round"/><path d="M101.8,511 L103.6,512 L104.4,514 L106,514.8 M112.6,500.2 L116.9,504" stroke="#444" stroke-width="1.1" fill="none"/></g><g transform="translate(0,78)"><path d="M97,518.3 H120" stroke="#4a6faf" stroke-width="1.4"/><path d="M100,516.6 L101.8,511 L115.1,497.7 L119.4,501.4 L106,514.8 Z" fill="#fff" stroke="#444" stroke-width="1.4" stroke-linejoin="round"/><path d="M101.8,511 L103.6,512 L104.4,514 L106,514.8 M112.6,500.2 L116.9,504" stroke="#444" stroke-width="1.1" fill="none"/></g>
  <path d="M66.69999999999999,962.9 L75.1,970.3000000000001 L83.5,962.9" stroke="#555" stroke-width="3.1" fill="none"/>
  <!-- part icon -->
  <g stroke="#4a4a4a" stroke-width="1.3" stroke-linejoin="round">
    <path d="M97.6,1005.9 H108.5 L113.3,1008.9 H102.4 Z" fill="#f4f4f4"/>
    <path d="M97.6,1005.9 L102.4,1008.9 V1016.2 L97.6,1011.3 Z" fill="#e2e2e2"/>
    <path d="M109.7,995 H116.4 L120,998.6 H113.3 Z" fill="#f4f4f4"/>
    <path d="M109.7,995 L113.3,998.6 V1008.9 L108.5,1005.9 H109.7 Z" fill="#e2e2e2"/>
    <path d="M102.4,1008.9 H113.3 V998.6 H120 V1016.2 H102.4 Z" fill="#fdfdfd"/>
  </g>
  </g>
<g id="dlg-icons">
  <!-- confirm check -->
  <path d="M626.6,140.6 L632.6,146.8 L645,133.6" stroke="#fff" stroke-width="4.6"/>
  <!-- cancel X -->
  <path d="M670.4,133.2 L684.8,147.6 M684.8,133.2 L670.4,147.6" stroke="#c5213b" stroke-width="4"/>
  <!-- clock -->
  <circle cx="675" cy="188" r="12.6" stroke="#333" stroke-width="1.5"/><circle cx="675" cy="188" r="9.6" stroke="#333" stroke-width="1.5"/>
  <path d="M675,179 V188.6 H683.6" stroke="#333" stroke-width="1.5"/>
  <!-- small x -->
  <path d="M627.2,211.6 L636.8,221.2 M636.8,211.6 L627.2,221.2" stroke="#444" stroke-width="1.7"/>
  <!-- check in checkbox -->
  <path d="M379.6,385.6 L383,389.2 L389.2,381.4" stroke="#fff" stroke-width="2.6"/>
  <!-- final icon -->
  <circle cx="643.9" cy="426" r="12.6" stroke="#222" stroke-width="1.6" fill="#fff"/>
  <path d="M638,430.6 L643.6,419.4 L648.3,414.7 M638,430.6 L649.7,426.4 L655.3,419.9 M643.6,419.4 L649.7,426.4" stroke="#222" stroke-width="1.6" stroke-linejoin="round" fill="none"/>
  <path d="M638,430.6 L640.6,425.6 L643.4,428.6 Z" fill="#222"/>
  <path d="M635.2,432.8 H653.9" stroke="#1f4f9f" stroke-width="2"/>
  <path d="M653,434.9 L656.3,437.6" stroke="#222" stroke-width="2.8" stroke-linecap="round"/>
  <!-- help -->
  <circle cx="682.5" cy="430.4" r="9.2" fill="#a6a6a6"/>
  <path d="M679,428 q0,-3.2 3.3,-3.2 q3.1,0 3.1,2.8 q0,1.7 -1.6,2.5 q-1.4,0.7 -1.4,2.2" stroke="#fff" stroke-width="2.3"/><rect x="681.1" y="434" width="2.5" height="2.5" fill="#fff"/>
  <!-- collapse list -->
  <path d="M385.6,733.6 H404.4 M385.6,741 H404.4 M385.6,748.4 H404.4 M385.6,755.6 H404.4" stroke="#333" stroke-width="1.4"/>
  <path d="M382.6,735.6 V756.6" stroke="#333" stroke-width="1.6"/>
  <path d="M378.6,731.6 L382.6,735.2 L386.6,731.6" stroke="#333" stroke-width="1.4"/>
</g>
<g id="bb-icons">
  <!-- tab search -->
  <path d="M16.6,1420.8 V1411.8 Q16.6,1409.4 19,1409.4 H41.4 Q43.8,1409.4 43.8,1411.8 V1420.8 Z" fill="#2f2f2f"/>
  <circle cx="32.5" cy="1421" r="8.6" fill="#f9f9f9"/>
  <circle cx="32.5" cy="1421" r="5.3" stroke="#2f2f2f" stroke-width="2.7" fill="#f9f9f9"/><path d="M36.6,1425.2 L42.2,1431" stroke="#2f2f2f" stroke-width="3"/>
  <!-- plus -->
  <path d="M73.8,1416.9 H95.8 M84.8,1405.9 V1427.9" stroke="#555" stroke-width="4.4"/>
  <!-- download circle -->
  <circle cx="149.2" cy="1413.7" r="9.8" fill="#6b9fdc"/>
  <path d="M146.6,1407.4 H151.8 V1413.2 H155.2 L149.2,1420 L143.2,1413.2 H146.6 Z" fill="#fff"/>
  <!-- assembly icon -->
  <path d="M166.6,1402.6 H186.4 L191.4,1407.8 V1427.4 H171.8 L166.6,1422.4 Z" fill="#fff" stroke="#222" stroke-width="1.7" stroke-linejoin="round"/>
  <path d="M166.6,1402.6 L171.8,1407.8 H191.4 M171.8,1407.8 V1427.4" stroke="#222" stroke-width="1.2"/>
  <path d="M167.6,1404 H183 V1419.6 H167.6 Z" fill="#8c8c8c"/><path d="M167.6,1404 L171.8,1408 H183 V1419.6 H171.8 V1408" fill="#a2a2a2" stroke="#6e6e6e" stroke-width="0.9"/>
  <!-- part studio icon -->
  <g fill="#fff" stroke="#222" stroke-width="1.5" stroke-linejoin="round">
    <path d="M440.6,1409.6 L444.6,1407 H449.6 L452,1409.6 V1427 H444.6 L440.6,1424 Z"/><path d="M440.6,1409.6 L444.6,1412.4 V1427 M444.6,1412.4 H452" fill="none" stroke-width="1.1"/>
    <path d="M452.6,1404.4 L456.4,1402 H462.4 L465,1404.6 V1427 H456.6 L452.6,1424 Z"/><path d="M452.6,1404.4 L456.6,1407.4 V1427 M456.6,1407.4 H465" fill="none" stroke-width="1.1"/>
  </g>
  <!-- folder in tab 3 -->
  <path d="M742.6,1424.4 V1405 H754.4 L756.6,1408.6 H767.8 V1424.4 Z" fill="#f2f2f2" stroke="#333" stroke-width="1.8" stroke-linejoin="round"/>
  <!-- measure icons -->
  <g stroke="#222" stroke-width="1.7" stroke-linejoin="round">
    <path d="M2412.6,1374 H2424 V1371 A6.2,4.4 0 0 1 2436.2,1371 V1378 Q2436,1382 2430,1382.4 H2412.6 Z" fill="#fff"/>
    <ellipse cx="2430" cy="1371" rx="3.6" ry="2.1" fill="#ddd"/>
    <path d="M2415.6,1382 v-3 M2418.6,1382 v-2 M2421.6,1382 v-3 M2424.6,1382 v-2 M2427.6,1382 v-3 M2430.6,1382 v-2 M2433.4,1381 v-2.6" stroke-width="1.1"/>
    <path d="M2463,1383.4 A14,17.4 0 0 1 2491,1383.4 Z" fill="#fff"/>
    <path d="M2468.6,1380.4 A8.4,10.4 0 0 1 2485.4,1380.4 H2479.8 A2.8,3 0 0 0 2474.2,1380.4 Z" fill="#fff" stroke-width="1.5"/>
    <path d="M2519.6,1383.6 H2538 M2528.8,1364.6 V1380 M2521.6,1364.6 H2536" stroke-width="2"/>
    <path d="M2519.4,1376 L2522.8,1365 L2526.2,1376 Z M2531.4,1376 L2534.8,1365 L2538.2,1376 Z" fill="#fff" stroke-width="1.4"/>
    <path d="M2519,1380.4 H2538.6" stroke-width="1.4"/>
  </g>
  <g stroke="#555" stroke-width="0.8"><path d="M2465.6,1378 l1.8,0.6 M2466.6,1374 l1.8,1 M2468.6,1370.6 l1.6,1.4 M2471.4,1368 l1.2,1.7 M2475,1366.6 l0.5,2 M2479,1366.6 l-0.5,2 M2482.6,1368 l-1.2,1.7 M2485.4,1370.6 l-1.6,1.4 M2487.4,1374 l-1.8,1 M2488.4,1378 l-1.8,0.6"/></g>
</g>
<g id="viewcube">
  <g fill="#e3e7e8">
    <path d="M2423.7,137.6 L2434,151.2 H2413.4 Z"/>
    <path d="M2423.7,360.4 L2413.6,346.2 H2433.8 Z"/>
    <path d="M2313.4,248.3 L2326,239.2 V257.6 Z"/>
    <path d="M2536.8,248.3 L2523.2,239.2 V257.6 Z"/>
    <path d="M2393.6,154.4 Q2368,163 2352,184 L2344.4,178.4 L2344.8,196.6 L2362.4,191.6 L2356.4,187.2 Q2370,170 2391.2,160.6 Z" transform="translate(0,-9)"/>
    <path d="M2454.2,154.4 Q2480,163 2496,184 L2503.6,178.4 L2503.2,196.6 L2485.6,191.6 L2491.6,187.2 Q2478,170 2456.8,160.6 Z" transform="translate(0,-9)"/>
    <path d="M2396,206.8 H2455 L2466.6,218.4 V281 L2455,292.6 H2396 L2384.4,281 V218.4 Z"/>
  </g>
  <rect x="2390.4" y="215.4" width="67.8" height="66.8" rx="13" fill="#fff"/>
  <path d="M2378.3,206.6 V294.4" stroke="#3a2fc8" stroke-width="2"/>
  <path d="M2377.4,294.4 H2466.4" stroke="#44ad44" stroke-width="2"/>
  <text x="2404" y="253" font-family="Liberation Sans, sans-serif" font-size="20" fill="#222" textLength="40.5" lengthAdjust="spacingAndGlyphs">Right</text>
  <text x="2373" y="197.6" font-family="Liberation Sans, sans-serif" font-size="21" font-weight="bold" fill="#3a2fc8" textLength="11" lengthAdjust="spacingAndGlyphs">Z</text>
  <text x="2476.6" y="300" font-family="Liberation Sans, sans-serif" font-size="19" font-weight="bold" fill="#44ad44" textLength="10" lengthAdjust="spacingAndGlyphs">Y</text>
  <!-- view cube menu -->
  <path d="M2491.2,335 L2503.6,340.4 V354.4 L2491.2,360.6 L2478.6,354.4 V340.4 Z" fill="#e9e9e9" stroke="#222" stroke-width="1.7" stroke-linejoin="round"/>
  <path d="M2478.6,340.4 L2491.2,346 V360.6 L2478.6,354.4 Z" fill="#9a9a9a" stroke="#222" stroke-width="1.5" stroke-linejoin="round"/>
  <path d="M2491.2,346 L2503.6,340.4 V354.4 L2491.2,360.6 Z" fill="#d0d0d0" stroke="#222" stroke-width="1.5" stroke-linejoin="round"/>
  <path d="M2517.4,344.4 H2528.8 L2523.1,350.4 Z" fill="#222"/>
</g>
<g id="rt-icons">
  <path d="M2560,485.5 H2511.5 V684.2 H2560" stroke="#bdbdbd" stroke-width="1.3" fill="#fff"/><path d="M2511.5,535.2 H2560" stroke="#bdbdbd" stroke-width="1.3"/><path d="M2511.5,584.3 H2560" stroke="#bdbdbd" stroke-width="1.3"/><path d="M2511.5,633.8 H2560" stroke="#bdbdbd" stroke-width="1.3"/>
  <!-- appearance swatches -->
  <path d="M2525.4,516.6 L2535.4,499 Q2536.4,497.8 2537.8,498.6 L2543.4,502 L2534,517 Z" fill="#6a6a6a"/>
  <path d="M2531,517 L2542,504.6 Q2543.2,503.8 2544.4,504.8 L2549.6,509.6 Q2550.4,510.8 2549.6,511.8 L2545,517 Z" fill="#8a8a8a"/>
  <path d="M2528,517 L2537,508 L2546,517 Z" fill="#cfcfcf"/>
  <rect x="2522.4" y="517.4" width="28" height="8.6" rx="1.6" fill="#fff" stroke="#333" stroke-width="1.3"/>
  <path d="M2532,517.4 V526 M2541.2,517.4 V526" stroke="#333" stroke-width="1"/><rect x="2541.6" y="518.2" width="8" height="7" fill="#d4d4d4"/><circle cx="2527" cy="521.8" r="1.6" stroke="#333" stroke-width="1"/>
  <!-- config table cube -->
  <path d="M2538.4,552 L2549.6,557.2 V569.6 L2538.4,575 L2527.2,569.6 V557.2 Z M2527.2,557.2 L2538.4,562.4 L2549.6,557.2 M2538.4,562.4 V575" fill="#fff" stroke="#333" stroke-width="1.6" stroke-linejoin="round"/>
  <rect x="2521.4" y="547.2" width="14.6" height="11.4" fill="#2a66c4"/>
  <path d="M2521.4,551 H2536 M2521.4,554.8 H2536 M2526.2,547.2 V558.6 M2531,547.2 V558.6" stroke="#cfe0f7" stroke-width="0.9"/>
  <!-- config variables -->
  <path d="M2537,603.6 L2545,607.4 V616.4 L2537,620.4 L2529,616.4 V607.4 Z M2529,607.4 L2537,611.2 L2545,607.4 M2537,611.2 V620.4" fill="#fff" stroke="#333" stroke-width="1.4" stroke-linejoin="round"/>
  <path d="M2527.4,609.4 q-2.4,0 -2.4,2.2 v1.6 q0,1.6 -1.6,2 q1.6,0.4 1.6,2 v3.6 q0,2.2 2.4,2.2 M2546.6,601 q2.4,0 2.4,2.2 v6 q0,1.6 1.6,2 q-1.6,0.4 -1.6,2 v7.2 q0,2.2 -2.4,2.2" stroke="#333" stroke-width="1.3"/>
  <rect x="2521.4" y="597.2" width="14.6" height="11.4" fill="#3a3a3a"/>
  <path d="M2521.4,601 H2536 M2521.4,604.8 H2536 M2526.2,597.2 V608.6 M2531,597.2 V608.6" stroke="#d8d8d8" stroke-width="0.9"/>
  <!-- variable table (x) -->
  <path d="M2525,651.4 q-3.4,10 0,20 M2548.4,651.4 q3.4,10 0,20" stroke="#222" stroke-width="2.4"/>
  <path d="M2529.6,668 C2534,668 2538,655 2545,655.6 M2531,656.6 C2536,655 2537,668.6 2544,667.6" stroke="#222" stroke-width="2.6"/>
  <rect x="2521.4" y="646.2" width="14.6" height="11.4" fill="#3a3a3a"/>
  <path d="M2521.4,650 H2536 M2521.4,653.8 H2536 M2526.2,646.2 V657.6 M2531,646.2 V657.6" stroke="#d8d8d8" stroke-width="0.9"/>

  <path d="M2560,700 H2511.5 V996.7 H2560" stroke="#bdbdbd" stroke-width="1.3" fill="#fff"/><path d="M2511.5,748.9 H2560" stroke="#bdbdbd" stroke-width="1.3"/><path d="M2511.5,798.9 H2560" stroke="#bdbdbd" stroke-width="1.3"/><path d="M2511.5,848.2 H2560" stroke="#bdbdbd" stroke-width="1.3"/><path d="M2511.5,897.8 H2560" stroke="#bdbdbd" stroke-width="1.3"/><path d="M2511.5,947.1 H2560" stroke="#bdbdbd" stroke-width="1.3"/>
  <!-- MK -->
  <rect x="2518.6" y="706.8" width="35.4" height="35.4" rx="4" fill="#dcdcdc"/>
  <rect x="2520.8" y="709.6" width="31" height="30" fill="#1b5fd3" stroke="#111" stroke-width="1.4"/>
  <text x="2523.4" y="734.6" font-family="Liberation Serif, serif" font-weight="bold" font-size="25" fill="#fff" textLength="26" lengthAdjust="spacingAndGlyphs">MK</text>
  <!-- robot -->
  <rect x="2518.6" y="756.4" width="35.4" height="35.4" rx="5" fill="#dcdcdc"/>
  <path d="M2522.4,771.4 L2549.4,768.6 L2550.8,786.4 L2524.4,788.6 Z" fill="#1d1d1d"/>
  <path d="M2520.6,776 l2,-0.2 l0.6,7 l-2,0.2 Z M2550.4,773.4 l2,-0.2 l0.6,7 l-2,0.2 Z" fill="#1d1d1d"/>
  <path d="M2535.4,770 V764.4" stroke="#1d1d1d" stroke-width="1.8"/><circle cx="2535.4" cy="763" r="2" fill="#1d1d1d"/>
  <circle cx="2530.4" cy="777.4" r="4" fill="#fff"/><circle cx="2541.8" cy="776" r="4" fill="#fff"/>
  <circle cx="2531" cy="777.8" r="2.4" fill="#2a6fe0"/><circle cx="2542.6" cy="776" r="2.4" fill="#2a6fe0"/>
  <path d="M2535,784.4 q3.4,1.6 6.4,-1.4" stroke="#fff" stroke-width="1.4"/>
  <path d="M2528.4,761 q-1.4,2.6 0,5.2 M2525.8,759.8 q-2,3.8 0,7.6 M2542.4,760.4 q1.4,2.6 0,5.2 M2545,759.2 q2,3.8 0,7.6" stroke="#2a6fe0" stroke-width="1"/>
  <!-- derive cube -->
  <rect x="2518.6" y="806" width="35.4" height="35.4" rx="5" fill="#dcdcdc"/><rect x="2521" y="808.6" width="30.6" height="30.4" fill="#fff"/>
  <path d="M2542.6,815.4 L2549.6,818.8 V827 L2542.6,830.6 L2535.6,827 V818.8 Z M2535.6,818.8 L2542.6,822.4 L2549.6,818.8 M2542.6,822.4 V830.6" stroke="#222" stroke-width="1.3" stroke-linejoin="round"/>
  <path d="M2536,812.4 q-3,0 -3,2.6 v5 q0,2.4 -2.6,2.8 q2.6,0.4 2.6,2.8 v5 q0,2.6 3,2.6" stroke="#222" stroke-width="1.5"/>
  <path d="M2530.4,822.8 H2523.4 M2526.8,819 L2523,822.8 L2526.8,826.6" stroke="#222" stroke-width="1.6"/>
  <!-- A -->
  <rect x="2518.6" y="855" width="35.4" height="35.4" rx="5" fill="#dcdcdc"/>
  <path d="M2536.6,860.6 L2550.6,886.6 H2543 Q2543.4,879.6 2537,878 Q2531.6,876.6 2530.4,872.4 Z M2529,875.4 Q2530.8,879.4 2535.6,880.6 Q2539.6,881.8 2539.8,886.6 H2522.4 Z" fill="#22a4e0"/>
  <!-- green book -->
  <rect x="2518.6" y="904.4" width="35.4" height="35.4" rx="5" fill="#dcdcdc"/><rect x="2520.6" y="907" width="31.4" height="30.6" fill="#4caf50"/>
  <path d="M2524.6,913.6 Q2530.6,911.6 2535.6,914 V932.6 Q2530.6,930.6 2524.6,932.2 Z M2548,913.6 Q2542,911.6 2537,914 V932.6 Q2542,930.6 2548,932.2 Z" fill="#fff"/>
  <!-- blue book -->
  <rect x="2518.6" y="953.6" width="35.4" height="35.4" rx="5" fill="#dcdcdc"/><rect x="2520.8" y="956.4" width="31" height="30" fill="#1b5fd3" stroke="#111" stroke-width="1.4"/>
  <path d="M2524.6,962.8 Q2530.6,960.8 2535.6,963.2 V981.8 Q2530.6,979.8 2524.6,981.4 Z M2548,962.8 Q2542,960.8 2537,963.2 V981.8 Q2542,979.8 2548,981.4 Z" fill="#fff" stroke="#111" stroke-width="0.9"/>
</g>
</svg>

</body>
</html>
